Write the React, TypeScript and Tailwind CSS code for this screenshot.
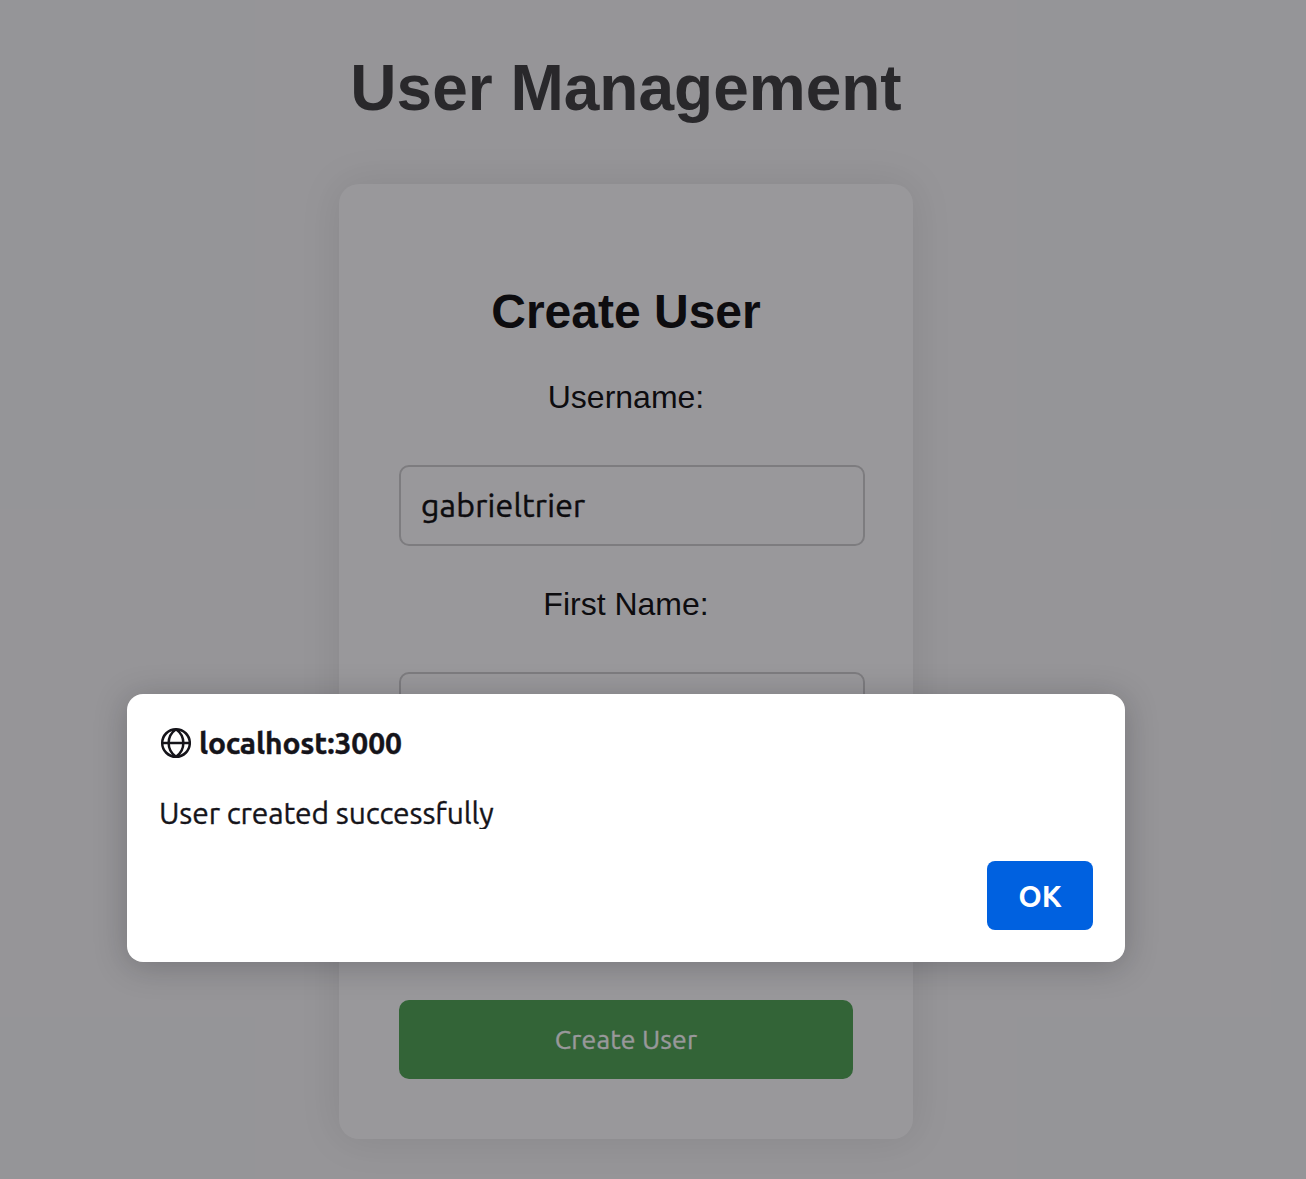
import React from "react";

const ui = "font-['Ubuntu','Noto_Sans',sans-serif]";

function Label({ children }: { children: React.ReactNode }) {
  return <div className="text-center text-[32px] leading-9">{children}</div>;
}

function Field({ value }: { value: string }) {
  return (
    <div className={`${ui} flex h-[81px] w-[466px] items-center rounded-[10px] border-2 border-[#ccc] px-5 pb-[2px] text-[32px] tracking-[0.22px] [-webkit-text-stroke:0.45px_black]`}>
      {value}
    </div>
  );
}

function Globe() {
  return (
    <svg className="ml-px" width="31" height="32" viewBox="0 0 31 32" fill="none" stroke="#15141a" strokeWidth="2.5">
      <circle cx="16" cy="16" r="13.8" />
      <path d="M16 2.2C6.2 9 6.2 23 16 29.8C25.8 23 25.8 9 16 2.2Z" strokeLinejoin="round" />
      <path d="M2 16h28" />
    </svg>
  );
}

export default function App() {
  return (
    <div className="grid h-[1179px] w-[1306px] overflow-hidden font-['Liberation_Sans',sans-serif]">
      <main className="col-start-1 row-start-1 flex h-[1179px] flex-col items-center bg-[#f9f9f9] pr-[54px]">
        <h1 className="mt-[51px] text-[64px] leading-[74px] font-bold text-[#333]">User Management</h1>
        <section className="mt-[59px] h-[955px] w-[574px] rounded-[20px] bg-white px-[60px] shadow-[0_0_40px_rgba(0,0,0,0.1)]">
          <h2 className="mt-[100px] mb-[40px] text-center text-[48px] leading-[55px] font-bold">Create User</h2>
          <Label>Username:</Label>
          <div className="mt-[50px] mb-[40px]">
            <Field value="gabrieltrier" />
          </div>
          <Label>First Name:</Label>
          <div className="mt-[50px]">
            <Field value="" />
          </div>
          <button className={`${ui} mt-[247px] h-[79px] w-[454px] rounded-[10px] bg-[#45a049] pb-[2px] text-[26.67px] tracking-[0.15px] text-white [-webkit-text-stroke:0.3px_white]`}>
            Create User
          </button>
        </section>
      </main>
      <div className="z-10 col-start-1 row-start-1 bg-[rgba(28,27,34,0.45)] pt-[694px] pl-[127px]">
        <div role="dialog" className={`${ui} h-[268px] w-[998px] rounded-[16px] bg-white px-8 pt-[33px] text-[30px] text-[#15141a] shadow-[0_4px_32px_rgba(21,20,26,0.25)]`}>
          <div className="flex h-8 items-center gap-2 font-bold tracking-[-0.14px]">
            <Globe />
            <span className="[-webkit-text-stroke:0.4px_#15141a]">localhost:3000</span>
          </div>
          <p className="mt-[36px] h-[34px] overflow-hidden leading-9 tracking-[-0.12px] [-webkit-text-stroke:0.35px_#15141a]">User created successfully</p>
          <div className="mt-[32px] flex justify-end">
            <button className="h-[69px] w-[106px] rounded-[8px] bg-[#0061e0] pt-[2px] font-bold text-white">OK</button>
          </div>
        </div>
      </div>
    </div>
  );
}
